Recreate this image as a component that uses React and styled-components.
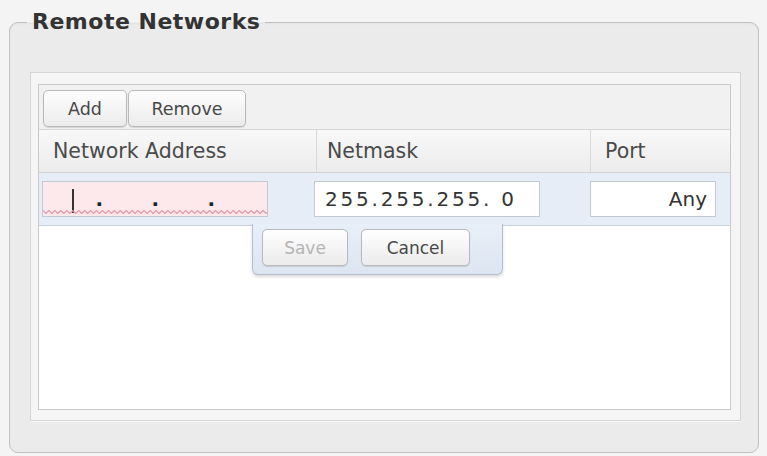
import React from "react";
import styled, { createGlobalStyle } from "styled-components";

const Global = createGlobalStyle`
  html, body { margin: 0; padding: 0; background: #f4f4f4; }
  body { font-family: "DejaVu Sans", "Liberation Sans", sans-serif; }
`;

const Page = styled.div`
  width: 767px;
  height: 456px;
  box-sizing: border-box;
  padding: 9px 8px 0 9px;
  background: #f4f4f4;
`;

const Fieldset = styled.fieldset`
  margin: 0;
  width: 750px;
  height: 444px;
  box-sizing: border-box;
  border: 1px solid #c2c2c2;
  border-radius: 9px;
  background: #ebebeb;
  padding: 37px 17px 31px 20px;
  box-shadow: inset 0 1px 2px rgba(0,0,0,0.04);
  display: flex;
  flex-direction: column;
`;

const Legend = styled.legend`
  margin-left: -3px;
  padding: 0 5px;
  font-family: "DejaVu Sans", sans-serif;
  font-weight: bold;
  font-size: 22px;
  letter-spacing: 0.5px;
  line-height: 26px;
  color: #333;
`;

const Panel = styled.div`
  flex: 1;
  border: 1px solid #d4d4d4;
  background: #f5f5f5;
  padding: 11px 9px 10px 7px;
  display: flex;
  flex-direction: column;
  box-shadow: 0 1px 0 #fafafa;
`;

const Grid = styled.div`
  flex: 1;
  border: 1px solid #cacaca;
  background: #fff;
  display: flex;
  flex-direction: column;
  position: relative;
`;

const Toolbar = styled.div`
  height: 45px;
  box-sizing: border-box;
  display: flex;
  gap: 1px;
  padding: 5px 4px;
  background: #f1f1f1;
  border-bottom: 1px solid #d8d8d8;
`;

const Button = styled.button`
  box-sizing: border-box;
  height: 37px;
  width: ${p => p.$w}px;
  padding: 0;
  border: 1px solid #b9b9b9;
  border-radius: 5px;
  background: linear-gradient(#fefefe, #ebebeb);
  box-shadow: 0 1px 1px rgba(0,0,0,0.12);
  font-family: "DejaVu Sans", sans-serif;
  font-size: ${p => p.$fs || 17.5}px;
  color: ${p => (p.disabled ? "#b4b4b4" : "#484848")};
  cursor: default;
`;

const Header = styled.div`
  display: grid;
  grid-template-columns: 278px 274px 1fr;
  height: 43px;
  box-sizing: border-box;
  background: linear-gradient(#f8f8f8, #ececec);
  border-bottom: 1px solid #d2d2d2;
`;

const HeadCell = styled.div`
  display: flex;
  align-items: center;
  padding-left: ${p => p.$pl}px;
  font-size: 20.5px;
  color: #4a4a4a;
  border-right: 1px solid #d9d9d9;
  &:last-child { border-right: none; }
`;

const EditRow = styled.div`
  position: relative;
  height: 53px;
  box-sizing: border-box;
  background: #e6edf6;
  border-bottom: 1px solid #c8d1dc;
  display: flex;
  align-items: center;
  padding-left: 3px;
`;

const Input = styled.div`
  position: relative;
  box-sizing: border-box;
  width: ${p => p.$w}px;
  height: 36px;
  margin-left: ${p => p.$ml || 0}px;
  border: 1px solid #c3cad3;
  background: ${p => (p.$invalid ? "#fde8ec" : "#fff")};
  display: flex;
  align-items: center;
  justify-content: ${p => (p.$right ? "flex-end" : "flex-start")};
  padding: ${p => (p.$invalid ? "0" : "0 8px 0 10px")};
  font-size: 20px;
  color: #333;
`;

const IpText = styled.span`
  letter-spacing: 2.8px;
  white-space: pre;
`;

const Segment = styled.span`
  position: relative;
  width: ${p => p.$w}px;
  flex: none;
  height: 100%;
  display: flex;
  align-items: center;
  justify-content: flex-end;
  font-size: 20px;
  font-weight: bold;
  color: #222;
`;

const Caret = styled.span`
  position: absolute;
  left: 29px;
  top: 7px;
  width: 1.5px;
  height: 24px;
  background: #333;
`;

const Wavy = styled.svg`
  position: absolute;
  left: 0;
  bottom: 2px;
  width: 100%;
  height: 4px;
`;

const Popup = styled.div`
  position: absolute;
  left: 213px;
  top: 51px;
  width: 251px;
  height: 51px;
  box-sizing: border-box;
  background: linear-gradient(#e9eff8, #dce5f1);
  border: 1px solid #b3bfcd;
  border-top: none;
  border-radius: 0 0 6px 6px;
  box-shadow: 0 2px 3px rgba(0,0,0,0.15);
  display: flex;
  gap: 13px;
  padding: 5px 0 0 9px;
  z-index: 2;
`;

const Body = styled.div`
  flex: 1;
  background: #fff;
`;

function WavyLine() {
  const pts = [];
  for (let x = 0; x <= 230; x += 3) pts.push(`${x},${(x / 3) % 2 ? 3.5 : 0.5}`);
  return (
    <Wavy viewBox="0 0 226 4" preserveAspectRatio="none">
      <polyline points={pts.join(" ")} fill="none" stroke="#e49aad" strokeWidth="1.2" />
    </Wavy>
  );
}

export default function App() {
  return (
    <>
      <Global />
      <Page>
        <Fieldset>
          <Legend>Remote Networks</Legend>
          <Panel>
            <Grid>
              <Toolbar>
                <Button $w={84}>Add</Button>
                <Button $w={118}>Remove</Button>
              </Toolbar>
              <Header>
                <HeadCell $pl={14}>Network Address</HeadCell>
                <HeadCell $pl={10}>Netmask</HeadCell>
                <HeadCell $pl={14}>Port</HeadCell>
              </Header>
              <EditRow>
                <Input $w={226} $invalid>
                  <Segment $w={60}>
                    <Caret />.
                  </Segment>
                  <Segment $w={56}>.</Segment>
                  <Segment $w={56}>.</Segment>
                  <WavyLine />
                </Input>
                <Input $w={226} $ml={46}>
                  <IpText>255.255.255. 0</IpText>
                </Input>
                <Input $w={126} $ml={50} $right>
                  Any
                </Input>
                <Popup>
                  <Button $w={86} $fs={17} disabled>
                    Save
                  </Button>
                  <Button $w={109} $fs={17}>
                    Cancel
                  </Button>
                </Popup>
              </EditRow>
              <Body />
            </Grid>
          </Panel>
        </Fieldset>
      </Page>
    </>
  );
}
